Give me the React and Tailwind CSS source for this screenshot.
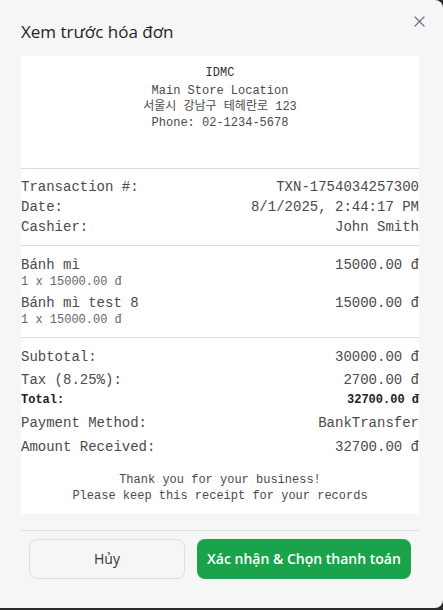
import React from 'react';

const receipt = {
  store: 'IDMC',
  location: 'Main Store Location',
  address: '서울시 강남구 테헤란로 123',
  phone: 'Phone: 02-1234-5678',
  txn: 'TXN-1754034257300',
  date: '8/1/2025, 2:44:17 PM',
  cashier: 'John Smith',
  items: [
    { name: 'Bánh mì', qty: 1, price: 15000 },
    { name: 'Bánh mì test 8', qty: 1, price: 15000 },
  ],
  subtotal: 30000,
  tax: 2700,
  total: 32700,
  method: 'BankTransfer',
  received: 32700,
};

const money = (n) => `${n.toFixed(2)} đ`;

const Row = ({ label, value, className = '' }) => (
  <div className={`flex justify-between items-center h-5 ${className}`}>
    <span>{label}</span>
    <span>{value}</span>
  </div>
);

export default function App() {
  return (
    <div className="w-[443px] h-[610px] bg-[#2a2a2a] overflow-hidden">
      <div className="relative w-full h-[608px] bg-[#f5f6f5] rounded-tr-lg rounded-br-lg px-[21px] pt-[20px] font-['Open_Sans','Noto_Sans',sans-serif]">
        <button className="absolute right-[18px] top-[15px] w-3 h-3 flex items-center justify-center text-[#6b7280]">
          <svg width="11" height="11" viewBox="0 0 11 11" fill="none" stroke="currentColor" strokeWidth="1.2" strokeLinecap="round">
            <path d="M1 1L10 10M10 1L1 10" />
          </svg>
        </button>
        <h2 className="text-[17px] leading-6 font-medium text-[#1f2328]">Xem trước hóa đơn</h2>

        <div className="mt-[12px] w-[398px] bg-white h-[458px] font-['Liberation_Mono','Noto_Sans_CJK_KR',monospace] text-[#4a4a4a]">
          <div className="pt-[9px] text-center text-xs leading-4">
            <div className="mb-[2px] text-[#333]">{receipt.store}</div>
            <div>{receipt.location}</div>
            <div>{receipt.address}</div>
            <div>{receipt.phone}</div>
          </div>

          <div className="mt-[37px] border-t border-[#d8dde3] py-2 text-sm">
            <Row label="Transaction #:" value={receipt.txn} />
            <Row label="Date:" value={receipt.date} />
            <Row label="Cashier:" value={receipt.cashier} />
          </div>

          <div className="border-t border-[#d8dde3] pt-[9px] pb-[10px] text-sm">
            {receipt.items.map((it, i) => (
              <div key={i} className={i > 0 ? 'mt-1' : ''}>
                <Row label={it.name} value={money(it.price)} />
                <div className="text-xs leading-[14px] text-[#666]">{it.qty} x {money(it.price)}</div>
              </div>
            ))}
          </div>

          <div className="border-t border-[#d8dde3] pt-[9px] text-sm">
            <Row label="Subtotal:" value={money(receipt.subtotal)} />
            <Row label="Tax (8.25%):" value={money(receipt.tax)} className="mt-[3px]" />
            <Row label="Total:" value={money(receipt.total)} className="text-xs font-bold text-[#222]" />
            <Row label="Payment Method:" value={receipt.method} className="mt-[3px]" />
            <Row label="Amount Received:" value={money(receipt.received)} className="mt-[4px]" />
          </div>

          <div className="mt-[15px] text-center text-xs leading-4">
            <div>Thank you for your business!</div>
            <div>Please keep this receipt for your records</div>
          </div>
        </div>

        <div className="mt-[16px] w-[398px] border-t border-[#dfe2e0] pt-[8px] px-2 flex gap-3">
          <button className="w-[156px] h-10 rounded-lg border border-[#dcdfdd] bg-[#f5f6f5] text-sm text-[#333] font-medium">Hủy</button>
          <button className="w-[214px] h-10 rounded-lg bg-[#1aa34a] text-sm text-white font-semibold">Xác nhận &amp; Chọn thanh toán</button>
        </div>
      </div>
    </div>
  );
}
